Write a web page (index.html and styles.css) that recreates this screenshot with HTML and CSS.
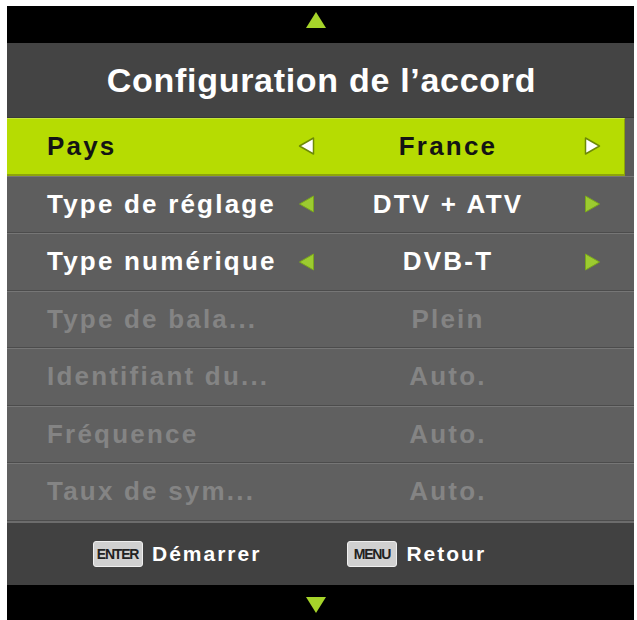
FILE: index.html
```html
<!DOCTYPE html>
<html lang="fr">
<head>
<meta charset="utf-8">
<title>Configuration de l’accord</title>
<link rel="stylesheet" href="styles.css">
</head>
<body>
<div class="screen">
  <div class="bar bar-top">
    <svg class="nav-tri" width="20" height="16" viewBox="0 0 20 16"><polygon points="10,0 20,16 0,16" fill="#a6d42a"/></svg>
  </div>
  <div class="title">Configuration de l’accord</div>
  <div class="list">
    <div class="row selected">
      <span class="label">Pays</span>
      <svg class="arrow arrow-left" width="17" height="18" viewBox="0 0 17 18"><polygon points="15.5,1 15.5,17 1.5,9" fill="#ffffff" stroke="#6d8a06" stroke-width="1.5" stroke-linejoin="round"/></svg>
      <span class="value">France</span>
      <svg class="arrow arrow-right" width="17" height="18" viewBox="0 0 17 18"><polygon points="1.5,1 1.5,17 15.5,9" fill="#ffffff" stroke="#6d8a06" stroke-width="1.5" stroke-linejoin="round"/></svg>
    </div>
    <div class="row">
      <span class="label">Type de réglage</span>
      <svg class="arrow arrow-left" width="17" height="18" viewBox="0 0 17 18"><polygon points="15.5,1 15.5,17 1.5,9" fill="#9ccb30" stroke="#7aa61c" stroke-width="1"/></svg>
      <span class="value">DTV + ATV</span>
      <svg class="arrow arrow-right" width="17" height="18" viewBox="0 0 17 18"><polygon points="1.5,1 1.5,17 15.5,9" fill="#9ccb30" stroke="#7aa61c" stroke-width="1"/></svg>
    </div>
    <div class="row">
      <span class="label">Type numérique</span>
      <svg class="arrow arrow-left" width="17" height="18" viewBox="0 0 17 18"><polygon points="15.5,1 15.5,17 1.5,9" fill="#9ccb30" stroke="#7aa61c" stroke-width="1"/></svg>
      <span class="value">DVB-T</span>
      <svg class="arrow arrow-right" width="17" height="18" viewBox="0 0 17 18"><polygon points="1.5,1 1.5,17 15.5,9" fill="#9ccb30" stroke="#7aa61c" stroke-width="1"/></svg>
    </div>
    <div class="row disabled">
      <span class="label">Type de bala...</span>
      <span class="value">Plein</span>
    </div>
    <div class="row disabled">
      <span class="label">Identifiant du...</span>
      <span class="value">Auto.</span>
    </div>
    <div class="row disabled">
      <span class="label">Fréquence</span>
      <span class="value">Auto.</span>
    </div>
    <div class="row disabled">
      <span class="label">Taux de sym...</span>
      <span class="value">Auto.</span>
    </div>
  </div>
  <div class="footer">
    <div class="hint hint-enter"><span class="key">ENTER</span><span class="hint-text">Démarrer</span></div>
    <div class="hint"><span class="key">MENU</span><span class="hint-text">Retour</span></div>
  </div>
  <div class="bar bar-bottom">
    <svg class="nav-tri" width="20" height="16" viewBox="0 0 20 16"><polygon points="0,0 20,0 10,16" fill="#a6d42a"/></svg>
  </div>
</div>
</body>
</html>
```

FILE: styles.css
```css
html, body {
  margin: 0;
  padding: 0;
  background: #ffffff;
}

body {
  font-family: "Liberation Sans", Arial, sans-serif;
}

.screen {
  width: 627px;
  margin: 6px 0 0 7px;
  background: #5c5c5c;
}

.bar {
  background: #000000;
  display: flex;
  justify-content: center;
  padding-right: 10px;
}

.bar-top {
  height: 37px;
  align-items: flex-start;
}

.bar-top .nav-tri {
  margin-top: 6px;
}

.bar-bottom {
  height: 40px;
  align-items: flex-start;
}

.bar-bottom .nav-tri {
  margin-top: 12px;
}

.title {
  height: 75px;
  background: #444444;
  color: #ffffff;
  font-weight: bold;
  font-size: 34px;
  letter-spacing: 0.7px;
  display: flex;
  align-items: center;
  justify-content: center;
  padding-left: 2px;
  border-bottom: 1px solid #3a3a3a;
  box-sizing: border-box;
}

.list {
  display: flex;
  flex-direction: column;
  background: #5a5a5a;
}

.row {
  height: 57.5px;
  box-sizing: border-box;
  display: grid;
  grid-template-columns: 291px 18px 262px 6px 17px 1fr;
  align-items: center;
  background: #5e5e5e;
  border-top: 1px solid #767676;
  border-bottom: 1px solid #4c4c4c;
  color: #ffffff;
  font-size: 26px;
  font-weight: bold;
  letter-spacing: 2.2px;
  white-space: nowrap;
}

.row.selected {
  background: #b6dc02;
  color: #141414;
  margin-right: 9px;
  border-top: 1px solid #c4e63a;
  border-bottom: 2px solid #8ea40c;
  border-right: 1px solid #8ea40c;
}

.row.disabled {
  color: #848484;
  background: #606060;
}

.label {
  grid-column: 1;
  padding-left: 40px;
}

.arrow-left {
  grid-column: 2;
  justify-self: start;
}

.value {
  grid-column: 3;
  text-align: center;
  padding-left: 2px;
}

.arrow-right {
  grid-column: 5;
}

.footer {
  height: 64px;
  box-sizing: border-box;
  background: #414141;
  border-top: 2px solid #6c6c6c;
  display: flex;
  align-items: center;
  padding-left: 86px;
  padding-top: 1px;
}

.hint {
  display: flex;
  align-items: center;
  gap: 9px;
}

.hint-enter {
  margin-right: 86px;
}

.key {
  width: 50px;
  height: 26px;
  box-sizing: border-box;
  background: #d0d0d0;
  border: 1px solid #efefef;
  border-radius: 3px;
  color: #222222;
  font-size: 14px;
  font-weight: bold;
  letter-spacing: -1.2px;
  display: flex;
  align-items: center;
  justify-content: center;
  padding-right: 1px;
}

.hint-text {
  color: #ffffff;
  font-size: 21px;
  font-weight: bold;
  letter-spacing: 2px;
}
```
